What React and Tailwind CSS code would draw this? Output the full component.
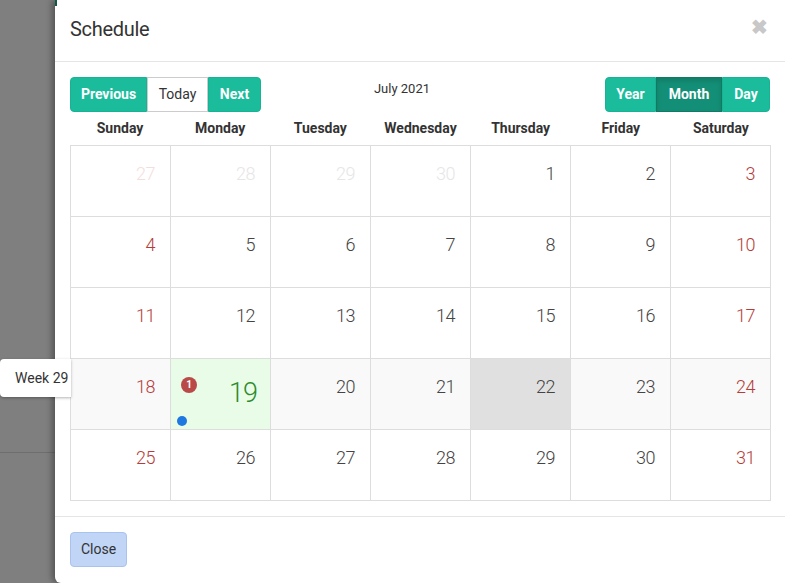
import React from "react";

const days = ["Sunday","Monday","Tuesday","Wednesday","Thursday","Friday","Saturday"];
const weeks = [
  [27,28,29,30,1,2,3],
  [4,5,6,7,8,9,10],
  [11,12,13,14,15,16,17],
  [18,19,20,21,22,23,24],
  [25,26,27,28,29,30,31],
];

function Cell({ d, wi, di }) {
  const outside = wi === 0 && d > 20;
  const weekend = di === 0 || di === 6;
  const isToday = wi === 3 && di === 1;
  const isSel = wi === 3 && di === 4;
  let bg = wi === 3 ? "bg-[#f9f9f9]" : "bg-white";
  if (isToday) bg = "bg-[#e8fce8]";
  if (isSel) bg = "bg-[#e0e0e0]";
  let color = "text-[#444]";
  if (weekend) color = "text-[#b43c3a]";
  if (outside) color = weekend ? "text-[#f3dede]" : "text-[#e6e6e6]";
  return (
    <div className={`relative h-[71px] border-r border-b border-[#dddddd] ${bg}`}>
      {isToday ? (
        <>
          <div className="absolute left-[10px] top-[18px] w-[16px] h-[16px] rounded-full bg-[#b94a48] text-white text-[10px] font-bold leading-[16px] text-center">1</div>
          <div className="absolute left-[6px] top-[57px] w-[10px] h-[10px] rounded-full bg-[#1e78e0]"></div>
          <div className="text-right pr-[13px] pt-[16px] text-[27px] leading-[36px] text-[#2e8b2e] font-light tracking-[-1px]">{d}</div>
        </>
      ) : (
        <div className={`text-right pr-[15px] pt-[15px] text-[18px] leading-[26px] font-light tracking-[-0.5px] ${color}`}>{d}</div>
      )}
    </div>
  );
}

export default function App() {
  return (
    <div className="relative w-[785px] h-[583px] overflow-hidden bg-[#7f7f7f] flex" style={{ fontFamily: "Roboto, 'Noto Sans', sans-serif" }}>
      <div className="w-[55px] shrink-0 flex flex-col">
        <div className="h-[453px] border-b border-[#6e6e6e]"></div>
      </div>
      <div className="relative w-[730px] shrink-0 h-[583px] bg-white rounded-bl-[6px] shadow-[-3px_0_6px_rgba(0,0,0,0.35)] flex flex-col">
        <div className="absolute left-0 top-0 w-[2px] h-[6px] bg-[#0f5a45]"></div>
        {/* header */}
        <div className="h-[62px] border-b border-[#e5e5e5] px-[15px] flex items-center justify-between">
          <div className="text-[20px] text-[#333] tracking-[-0.3px] pb-[3px]">Schedule</div>
          <div className="text-[#c8c8c8] text-[20px] font-bold leading-none pb-[8px] pr-[2px]">✖</div>
        </div>
        {/* body */}
        <div className="px-[15px] pt-[15px] pb-[15px] border-b border-[#e5e5e5]">
          <div className="flex items-start justify-between h-[35px]">
            <div className="flex h-[35px] text-[14px]">
              <div className="w-[77px] flex items-center justify-center bg-[#1abc9c] text-white font-bold rounded-l-[4px] border border-[#18b394]">Previous</div>
              <div className="w-[61px] flex items-center justify-center bg-white text-[#333] border border-[#cccccc]">Today</div>
              <div className="w-[53px] flex items-center justify-center bg-[#1abc9c] text-white font-bold rounded-r-[4px] border border-[#18b394]">Next</div>
            </div>
            <div className="text-[13px] text-[#333] pt-[2px] pr-[62px]">July 2021</div>
            <div className="flex h-[35px] text-[14px]">
              <div className="w-[51px] flex items-center justify-center bg-[#1abc9c] text-white font-bold rounded-l-[4px] border border-[#18b394]">Year</div>
              <div className="w-[66px] flex items-center justify-center bg-[#148f77] text-white font-bold border border-[#107a65] shadow-[inset_0_3px_5px_rgba(0,0,0,0.125)]">Month</div>
              <div className="w-[48px] flex items-center justify-center bg-[#1abc9c] text-white font-bold rounded-r-[4px] border border-[#18b394]">Day</div>
            </div>
          </div>
          <div className="grid grid-cols-7 w-[701px] h-[33px] items-center">
            {days.map((d) => (
              <div key={d} className="text-center text-[14px] font-bold text-[#333]">{d}</div>
            ))}
          </div>
          <div className="grid grid-cols-7 w-[701px] border-l border-t border-[#dddddd]">
            {weeks.map((w, wi) => w.map((d, di) => <Cell key={wi + "-" + di} d={d} wi={wi} di={di} />))}
          </div>
        </div>
        {/* footer */}
        <div className="px-[15px] pt-[15px]">
          <div className="w-[57px] h-[35px] flex items-center justify-center rounded-[4px] bg-[#c1d5f6] border border-[#a9c2ee] text-[14px] text-[#333]">Close</div>
        </div>
      </div>
      <div className="absolute left-0 top-[359px] w-[71px] h-[38px] bg-white rounded-l-[4px] shadow-[0_1px_3px_rgba(0,0,0,0.3)] flex items-center pl-[15px] text-[14px] text-[#333]">Week 29</div>
    </div>
  );
}
